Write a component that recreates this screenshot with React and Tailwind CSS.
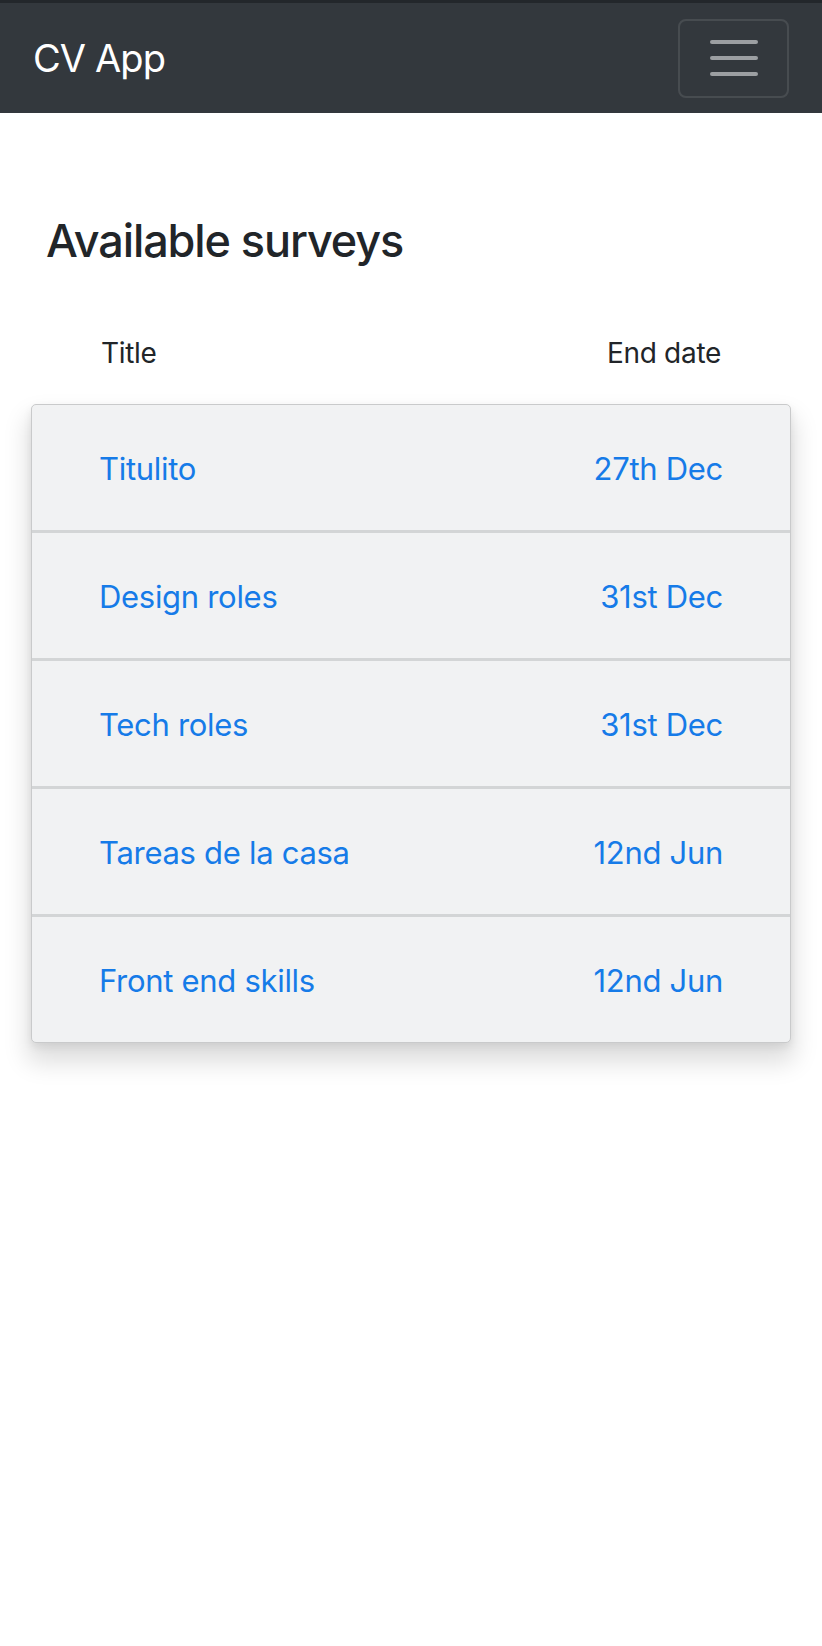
import React from "react";

const rows = [
  ["Titulito", "27th Dec"],
  ["Design roles", "31st Dec"],
  ["Tech roles", "31st Dec"],
  ["Tareas de la casa", "12nd Jun"],
  ["Front end skills", "12nd Jun"],
];

export default function App() {
  return (
    <div className="min-h-[1646px] bg-white" style={{ fontFamily: "Inter, 'Liberation Sans', sans-serif" }}>
      <nav className="h-[113px] bg-[#33383d] border-t-[3px] border-[#23272b] flex items-center justify-between pl-[33px] pr-[33px]">
        <span className="text-white text-[38px] tracking-[-0.9px] leading-none">CV App</span>
        <div className="w-[111px] h-[79px] border-2 border-white/10 rounded-[8px] flex flex-col items-center justify-center gap-[12px]">
          <span className="block w-[48px] h-[4px] rounded-full bg-[#9c9fa2]" />
          <span className="block w-[48px] h-[4px] rounded-full bg-[#9c9fa2]" />
          <span className="block w-[48px] h-[4px] rounded-full bg-[#9c9fa2]" />
        </div>
      </nav>
      <main className="pt-[101px]">
        <h2 className="pl-[46px] text-[45px] leading-[1.2] tracking-[-1.1px] text-[#212529] font-medium">Available surveys</h2>
        <div className="mt-[71px] flex justify-between pl-[101px] pr-[101px] text-[28px] text-[#212529] tracking-[-0.3px] leading-none">
          <span>Title</span>
          <span>End date</span>
        </div>
        <div className="mt-[37px] ml-[31px] w-[760px] rounded-[5px] border border-[#c9cacb] bg-[#f1f2f3] shadow-[0_16px_24px_4px_rgba(0,0,0,0.13),0_4px_8px_rgba(0,0,0,0.08)] overflow-hidden">
          {rows.map(([t, d], i) => (
            <div
              key={t}
              className={`flex items-center justify-between px-[67px] pt-[3px] text-[31px] text-[#167be8] tracking-[-0.3px] ${i < rows.length - 1 ? "h-[128px] border-b-[3px] border-[#d3d5d6]" : "h-[125px]"}`}
            >
              <span>{t}</span>
              <span>{d}</span>
            </div>
          ))}
        </div>
      </main>
    </div>
  );
}
